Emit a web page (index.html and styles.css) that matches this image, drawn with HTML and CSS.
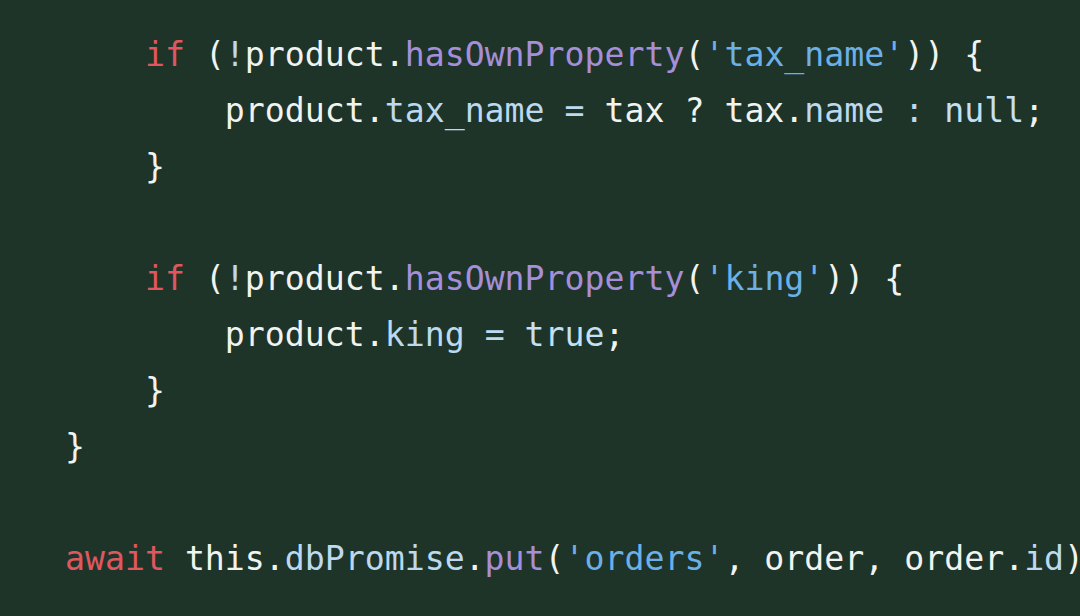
FILE: index.html
```html
<!DOCTYPE html>
<html>
<head>
<meta charset="utf-8">
<link rel="stylesheet" href="styles.css">
</head>
<body>
<pre class="code"><span class="ln">    <span class="kw">if</span> (<span class="op">!</span>product.<span class="fn">hasOwnProperty</span>(<span class="str">'tax_name'</span>)) {</span>
<span class="ln">        product.<span class="prop">tax_name</span> <span class="op">=</span> tax <span class="pl">?</span> tax.<span class="prop">name</span> <span class="op">:</span> <span class="lit">null</span>;</span>
<span class="ln">    }</span>
<span class="ln"> </span>
<span class="ln">    <span class="kw">if</span> (<span class="op">!</span>product.<span class="fn">hasOwnProperty</span>(<span class="str">'king'</span>)) {</span>
<span class="ln">        product.<span class="prop">king</span> <span class="op">=</span> <span class="lit">true</span>;</span>
<span class="ln">    }</span>
<span class="ln">}</span>
<span class="ln"> </span>
<span class="ln"><span class="kw">await</span> this.<span class="prop">dbPromise</span>.<span class="fn">put</span>(<span class="str">'orders'</span>, order, order.<span class="prop">id</span>)</span></pre>
</body>
</html>
```

FILE: styles.css
```css
html, body {
  margin: 0;
  padding: 0;
  background: #1f3429;
  width: 1080px;
  height: 616px;
  overflow: hidden;
}

.code {
  margin: 0;
  padding: 27px 0 0 65px;
  font-family: "DejaVu Sans Mono", monospace;
  font-size: 33.2px;
  line-height: 56px;
  color: #f1f3f1;
  white-space: pre;
}

.kw { color: #e0575f; }
.fn { color: #a68fd9; }
.str { color: #6cb0e8; }
.prop { color: #bcd9ef; }
.lit { color: #c4e0f4; }
.op { color: #bcd9ef; }
.pl { color: #f1f3f1; }
```
